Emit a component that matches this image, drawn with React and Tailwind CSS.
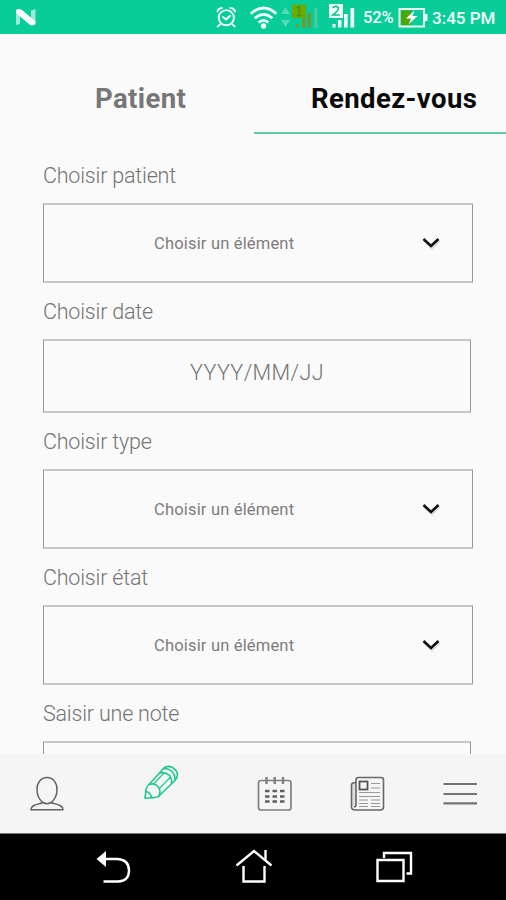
import React from "react";

function StatusBar() {
  return (
    <header className="flex h-[34px] shrink-0 items-center bg-[#08cd99] text-[#f1fffa]">
      <svg width="363" height="34" viewBox="0 0 363 34" className="shrink-0">
        <g fill="#fff">
          <path d="M16 11l4-1v14l-4 1z" opacity=".6" />
          <path d="M31 10.500l4.500-1.500V23L31 24z" opacity=".6" />
          <path d="M16 10q3-2 6 0L35.500 21.500V24q-3 2.500-6 .5L16 13z" />
        </g>
        <g fill="none" stroke="#f1fffa" strokeWidth="1.900" strokeLinecap="round">
          <circle cx="226.300" cy="17.700" r="7.600" />
          <path d="M217.500 11.500q.5-3 4.500-3.500M235 11.500q-.5-3-4.500-3.500M220 24.500l-2.300 2M232.500 24.500l2.300 2M223 17l3 2.500 4-3.500" />
        </g>
        <g fill="none" stroke="#f1fffa" strokeWidth="2.700">
          <path d="M250.700 13.800Q263.500 2.200 276.300 13.800" />
          <path d="M254.700 18.300q8.800-8 17.600 0" />
          <path d="M258.700 22.500q4.800-4.400 9.600 0" />
        </g>
        <circle cx="263.500" cy="26" r="2.700" fill="#f1fffa" />
        <path d="M281 14l4.500-7 4.500 7zM281 20h9l-4.500 7z" fill="#55d9b2" />
        <path d="M292 4.500h14v13.500h-14z" fill="#6fa800" />
        <path d="M296.500 8l2.800-1.500v9M296.500 15.500h5.500" stroke="#3b9b16" strokeWidth="1.600" fill="none" />
        <path d="M296 24h3v3.500h-3zM302 17h3.500v10.500H302zM307.500 13h3.500v14.500h-3.500z" fill="#6d9b31" />
        <path d="M314 8h3.500v19.500H314z" fill="#43cda0" />
        <g fill="#f1fffa">
          <path d="M329 4h14v14h-14z" />
          <path d="M332.500 24h3v3.500h-3zM338 20h3.500v7.500H338zM344 14h3.700v13.500H344zM350.500 8h3.700v19.500h-3.700z" />
        </g>
        <path d="M332.500 8q3-3 5.800-.5 1 2.500-5.500 7.500h7" stroke="#08bd8c" strokeWidth="1.500" fill="none" />
      </svg>
      <span className="w-[34px] whitespace-nowrap pt-[2px] text-[16.5px] leading-[22px] font-medium tracking-[-0.1px]">52%</span>
      <svg width="35" height="34" viewBox="397 0 35 34" className="shrink-0">
        <path d="M399.500 9H424v17.500h-24.500z" fill="#08cd99" stroke="#e9fff2" strokeWidth="2" />
        <path d="M401 10.500h10v14.500h-10z" fill="#4fa60c" />
        <path d="M425 14h2.500v7H425z" fill="#f1fffa" />
        <path d="M414.500 10.500l-8.500 8h5l-2.500 6 9-8.500h-5z" fill="#fff" />
      </svg>
      <span className="whitespace-nowrap pt-[2px] text-[17px] leading-[22px] font-medium">3:45 PM</span>
    </header>
  );
}

function Tabs() {
  return (
    <nav className="flex h-[100px] shrink-0 text-[27.5px] leading-[32px] font-bold tracking-[0.4px] whitespace-nowrap">
      <div className="w-[254px] pt-[49px] pl-[95px] text-[#777]">Patient</div>
      <div className="flex-1 border-b-2 border-[#5ccaa5] pt-[49px] pl-[57px] text-[#0a0a0a]">Rendez-vous</div>
    </nav>
  );
}

function Label({ children }) {
  return (
    <div className="flex h-[56px] shrink-0 items-center pt-[1px] text-[21.5px] leading-[28px] font-light tracking-[-0.2px] whitespace-nowrap text-[#747474]">
      {children}
    </div>
  );
}

function SelectBox() {
  return (
    <button className="flex h-[80px] w-[430px] shrink-0 items-center border-x border-y-2 border-x-[#999] border-y-[#c8c8c8]">
      <span className="ml-[110px] w-[142px] pt-[2px] text-left text-[16.5px] leading-[24px] tracking-[0.18px] whitespace-nowrap text-[#7d7d7d]">
        Choisir un élément
      </span>
      <svg width="20" height="14" viewBox="0 0 20 14" className="ml-[125px]" fill="none">
        <path d="M3 4.500l8 7.500 7.500-7.500" stroke="#dedede" strokeWidth="2.500" />
        <path d="M2.500 3l7.500 7 7.500-7" stroke="#111" strokeWidth="2.600" />
      </svg>
    </button>
  );
}

function BottomNav() {
  return (
    <nav className="h-[79px] shrink-0 bg-[#f5f5f5]">
      <svg width="506" height="79" viewBox="0 754 506 79" fill="none" className="block">
        <path
          d="M43 802.500c-4-3-6-8-6-13 0-7 4-12 10-12s10 5 10 12c0 5-2 10-6 13 4 2 12 1.500 12 7.200H31c0-5.700 8-5.200 12-7.200zM43 802.500q4 2.500 8 0"
          stroke="#626262"
          strokeWidth="1.500"
        />
        <g stroke="#1dca91" strokeWidth="1.600" strokeLinejoin="round" strokeLinecap="round">
          <path d="M145 798.300L146 789.500Q146.500 786.500 149 784.500L163.500 768.500Q167 765 172 767.200 176.500 769.500 177.500 774 177.500 777.500 175 780.500L159.500 795.500Q157.500 797.500 153 797.700Z" />
          <path d="M149 784.500Q155 782.500 158.500 787.500 161.500 791.500 158.500 796.500" />
          <path d="M145.800 791.500Q150.500 792 151.500 797.700" />
          <path d="M159.500 773Q165.500 771.500 169.500 775.500 172.500 779.500 171.500 783.500" />
          <path d="M163.500 768.500Q169.500 768.500 173 772.500 175.500 776 175 780" />
          <path d="M154 783.500L164 773M159.500 788.500L170 777.500" strokeWidth="1.100" />
        </g>
        <rect x="258.500" y="780.500" width="32.500" height="29.500" rx="2.500" stroke="#808080" strokeWidth="1.700" />
        <path d="M266.500 777v7M274.700 777v7M283 777v7" stroke="#808080" strokeWidth="2.400" />
        <path d="M265 791h4.500M272.500 791h4.500M280 791h4.500M265 796.500h4.500M272.500 796.500h4.500M280 796.500h4.500M265 801.500h4.500M272.500 801.500h4.500M280 801.500h4.500" stroke="#606060" strokeWidth="2.600" />
        <path d="M352 785q1-2 4-2v22q0 2-2 2-2 0-2-2z" fill="#dedede" />
        <path d="M356 805V780q0-2.500 2.500-2.500H381q2.500 0 2.500 2.500v27q0 3-3 3H355q-3.500 0-3.500-3.500V785q0-2.500 4.500-2.500M356 805q0 2-2 2" stroke="#686868" strokeWidth="1.600" />
        <rect x="359.500" y="781.500" width="8" height="8" stroke="#555" strokeWidth="1.800" />
        <path d="M371 783.500h9M371 788h9M359 792.500h21M359 796.500h21M359 800h9M371 800h9M359 803.500h9M371 803.500h9M359 806.500h9M371 806.500h9" stroke="#999" strokeWidth="1.200" />
        <path d="M443.500 784H477M443.500 794H477M443.500 803.300H477" stroke="#747474" strokeWidth="2.200" />
      </svg>
    </nav>
  );
}

function SystemNav() {
  return (
    <footer className="h-[67px] shrink-0 border-t border-[#777] bg-black">
      <svg width="506" height="66" viewBox="0 834 506 66" fill="none" className="block">
        <path d="M96.500 859l9.500-8v16z" fill="#fff" />
        <g stroke="#fff" strokeWidth="2.400">
          <path d="M104 859h14q11 1 11 11.500T118 881.500h-14.500" />
          <path d="M236.500 865.500L254 851l17.500 14.500M265.500 860v-10M243.500 866v15.500h21v-15.500" />
          <path d="M377.500 860h26v21h-26zM384 858v-5h27v20.500h-4.500" />
        </g>
      </svg>
    </footer>
  );
}

export default function App() {
  return (
    <div className="flex h-[900px] w-[506px] flex-col overflow-hidden bg-[#fafafa] font-[Roboto,'Liberation_Sans',sans-serif]">
      <StatusBar />
      <Tabs />
      <main className="flex min-h-0 flex-1 flex-col overflow-hidden pt-[13px] pl-[43px]">
        <Label>Choisir patient</Label>
        <SelectBox />
        <Label>Choisir date</Label>
        <div className="flex h-[74px] w-[428px] shrink-0 justify-center border-x border-y-2 border-x-[#999] border-y-[#c8c8c8] pt-[17px] text-[21.5px] leading-[30px] font-light tracking-[0.4px] text-[#747474]">
          YYYY/MM/JJ
        </div>
        <Label>Choisir type</Label>
        <SelectBox />
        <Label>Choisir état</Label>
        <SelectBox />
        <Label>Saisir une note</Label>
        <div className="h-[74px] w-[428px] shrink-0 border-x border-y-2 border-x-[#999] border-y-[#c8c8c8]" />
      </main>
      <BottomNav />
      <SystemNav />
    </div>
  );
}
